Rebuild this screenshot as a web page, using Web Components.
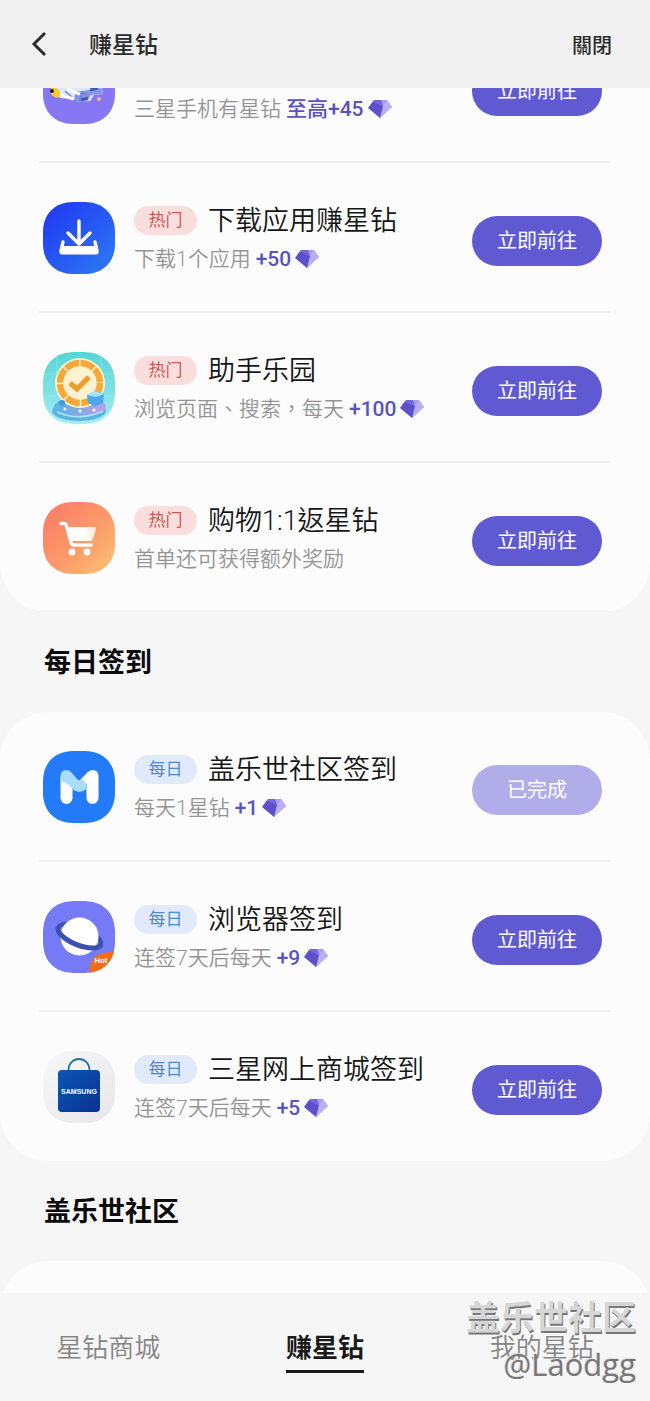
<!DOCTYPE html>
<html lang="zh-TW">
<head>
<meta charset="utf-8">
<meta name="viewport" content="width=device-width, initial-scale=1">
<title>赚星钻</title>
<style>
  body { margin: 0; background: #f6f6f6; color: #1a1a1a; font-family: Roboto, "Noto Sans CJK TC", "Noto Sans CJK SC", sans-serif; }
</style>
</head>
<body>
<rewards-app></rewards-app>

<template id="tpl-app">
  <style>
    :host { display: flex; flex-direction: column; height: 100vh; position: relative; }
    main { flex: 1; min-height: 0; overflow-y: auto; scrollbar-width: none; }
  </style>
  <app-header title-text="赚星钻" close-text="關閉"></app-header>
  <main>
    <task-card trailing-rule>
      <task-row icon="plane" action="立即前往">三星手机有星钻<star-value slot="value">至高+45</star-value></task-row>
      <task-row icon="download" tag="热门" heading="下载应用赚星钻" action="立即前往">下载1个应用<star-value slot="value">+50</star-value></task-row>
      <task-row icon="park" tag="热门" heading="助手乐园" action="立即前往">浏览页面、搜索，每天<star-value slot="value">+100</star-value></task-row>
      <task-row icon="cart" tag="热门" heading="购物1:1返星钻" action="立即前往">首单还可获得额外奖励</task-row>
    </task-card>
    <section-title>每日签到</section-title>
    <task-card>
      <task-row icon="community" tag="每日" daily heading="盖乐世社区签到" action="已完成" done>每天1星钻<star-value slot="value">+1</star-value></task-row>
      <task-row icon="browser" tag="每日" daily heading="浏览器签到" action="立即前往">连签7天后每天<star-value slot="value">+9</star-value></task-row>
      <task-row icon="shop" tag="每日" daily heading="三星网上商城签到" action="立即前往">连签7天后每天<star-value slot="value">+5</star-value></task-row>
    </task-card>
    <section-title>盖乐世社区</section-title>
    <task-card></task-card>
  </main>
  <bottom-nav></bottom-nav>
  <water-mark></water-mark>
</template>

<template id="tpl-header">
  <style>
    :host { display: block; background: #f1f1f1; color: #2b2b2b; }
    header { display: flex; align-items: center; height: 88px; padding: 0 38px 0 28px; box-sizing: border-box; }
    button { border: 0; background: none; padding: 0; margin: 0; font: inherit; color: inherit; cursor: pointer; }
    .back { width: 24px; height: 28px; }
    svg { display: block; width: 24px; height: 28px; }
    h1, .close { padding-top: 4px; line-height: 32px; font-weight: 500; }
    h1 { margin: 0 auto 0 37px; font-size: 23px; }
    .close { font-size: 20px; }
  </style>
  <header>
    <button class="back" aria-label="返回"><svg viewBox="0 0 24 28" fill="none" stroke="#2b2b2b" stroke-width="3"><path d="M17 3 6 14 17 25"/></svg></button>
    <h1></h1>
    <button class="close"></button>
  </header>
</template>

<template id="tpl-card">
  <style>
    :host { display: block; box-sizing: border-box; min-height: 150px; padding: 0 39px; border-radius: 48px; background: #fcfcfc; }
    ::slotted(task-row) { border-bottom: 2px solid #efefef; }
    ::slotted(task-row:last-child) { border-bottom: 1px solid transparent; }
    :host([trailing-rule]) ::slotted(task-row:last-child) { border-bottom-color: #efefef; }
  </style>
  <slot></slot>
</template>

<template id="tpl-section">
  <style>
    :host { display: block; padding: 31px 44px 29px; }
    h2 { margin: 0; font-size: 27px; line-height: 40px; font-weight: 700; color: #0c0c0c; }
  </style>
  <h2><slot></slot></h2>
</template>

<template id="tpl-value">
  <style>
    :host { display: inline-flex; align-items: center; gap: 4px; color: #5b52c2; font-weight: 500; }
    svg { width: 24px; height: 18px; }
  </style>
  <span><slot></slot></span>
  <svg viewBox="0 0 24 18" aria-hidden="true"><path d="M6 0H19L24 7 12 18Z" fill="#a89cf2"/><path d="M19 0 24 7 12 18 15 6Z" fill="#b9aff5"/><path d="M0 8 5 1 15 6 12 18Z" fill="#5d50cb"/><path d="M5 1 6 0H13L15 6Z" fill="#7466da"/></svg>
</template>

<template id="tpl-row">
  <style>
    :host { display: block; }
    article { display: flex; align-items: flex-start; gap: 19px; height: 148px; box-sizing: border-box; padding: 39px 9px 0 4px; }
    app-icon { flex: none; }
    .text { flex: 1; min-width: 0; display: flex; flex-direction: column; gap: 6px; }
    .head { display: flex; align-items: center; gap: 11px; min-height: 36px; }
    .tag { width: 63px; border-radius: 15px; background: #fadedd; color: #cd5650; font-size: 17px; line-height: 29px; text-align: center; }
    :host([daily]) .tag { background: #e0eafb; color: #4a89d4; }
    h3 { margin: 0; padding-top: 2px; font-size: 27px; line-height: 34px; font-weight: 350; color: #161616; white-space: nowrap; }
    p { margin: 0; display: flex; align-items: center; gap: 5px; font-size: 21px; line-height: 30px; font-weight: 350; color: #949494; white-space: nowrap; }
    button { flex: none; width: 130px; height: 50px; margin: 14px 0 0; padding: 0; border: 0; border-radius: 25px; background: #605ad2; color: #fff; font: 400 20px/50px Roboto, "Noto Sans CJK TC", sans-serif; cursor: pointer; }
    button:disabled { background: #b0ade8; }
  </style>
  <article>
    <app-icon></app-icon>
    <div class="text">
      <div class="head"></div>
      <p><span><slot></slot></span><slot name="value"></slot></p>
    </div>
    <button></button>
  </article>
</template>

<template id="tpl-nav">
  <style>
    :host { display: block; background: #f6f6f6; }
    nav { display: grid; grid-template-columns: repeat(3, 1fr); justify-items: center; height: 108px; box-sizing: border-box; padding-top: 35px; }
    a { height: 42px; border-bottom: 3px solid transparent; font-size: 26px; line-height: 40px; font-weight: 350; color: #858585; text-decoration: none; }
    a[aria-current] { font-weight: 700; color: #1a1a1a; border-color: #1a1a1a; }
  </style>
  <nav>
    <a href="#store">星钻商城</a>
    <a href="#earn" aria-current="page">赚星钻</a>
    <a href="#mine">我的星钻</a>
  </nav>
</template>

<template id="tpl-mark">
  <style>
    :host { position: absolute; right: 14px; bottom: 14px; display: flex; flex-direction: column; align-items: flex-end; pointer-events: none; }
    .name { font-size: 34px; line-height: 46px; font-weight: 700; color: #d6d6d6; text-shadow: 1px 2px 0 #777, -1px -1px 0 #fff; }
    .user { font-family: "Open Sans", "Noto Sans", sans-serif; font-size: 31px; line-height: 46px; color: #777; text-shadow: -1px -1px 0 #ddd; }
  </style>
  <span class="name">盖乐世社区</span>
  <span class="user">@Laodgg</span>
</template>

<script>
const SQ = 'M30 0H42C60 0 72 12 72 30V42C72 60 60 72 42 72H30C12 72 0 60 0 42V30C0 12 12 0 30 0Z';

const ICONS = {
  plane: `
    <path d="${SQ}" fill="#8678f4"/>
    <path d="M12 34 58 32 60 42 51 43 47 49 37 50 31 47 17 46Z" fill="#dfe6fb"/>
    <path d="M8 36Q16 34 18 43Q14 49 8 42Z" fill="#fdc931"/>
    <circle cx="9" cy="39" r="2" fill="#222"/>
    <path d="M33 40 58 36 60 42 48 43 44 49 35 51 31 46Z" fill="#8796df"/>
    <path d="M22 39 30 46M40 41l-4 8M30 39l14 3" stroke="#6983dc" stroke-width="1.5" fill="none"/>
    <path d="M17 43 31 47M24 37l13 5" stroke="#fff" stroke-width="3"/>
    <path d="M38 48l7-2M47 38l8-2" stroke="#3f59c0" stroke-width="3"/>
    <circle cx="56" cy="47" r="2" fill="#ffb38c"/>`,
  download: `
    <defs><linearGradient id="g" x1="0" y1="0" x2="1" y2="1"><stop offset="0" stop-color="#1f35f2"/><stop offset="1" stop-color="#2e7bf5"/></linearGradient></defs>
    <path d="${SQ}" fill="url(#g)"/>
    <g fill="none" stroke="#fff" stroke-linecap="round" stroke-linejoin="round">
      <path d="M36 19V41M25 31 36 42 47 31" stroke-width="3.4"/>
      <path d="M20 40 18 49M52 40 54 49" stroke-width="3.4"/>
    </g>
    <path d="M18 44H54L55.5 50Q55.5 52.5 53 52.5H19Q16.5 52.5 16.5 50Z" fill="#fff"/>`,
  park: `
    <defs><clipPath id="c"><path d="${SQ}"/></clipPath>
    <linearGradient id="g" x1="0" y1="0" x2="0" y2="1"><stop offset="0" stop-color="#57d5d5"/><stop offset=".7" stop-color="#8ce6ea"/><stop offset="1" stop-color="#a6f0f2"/></linearGradient>
    <linearGradient id="p" x1="0" x2="1"><stop offset="0" stop-color="#57b5e6"/><stop offset="1" stop-color="#b79fe4"/></linearGradient></defs>
    <g clip-path="url(#c)">
      <path d="${SQ}" fill="url(#g)"/>
      <path d="M0 22H72M0 44H72M14 0V72M58 0V72" stroke="#9eeaea" stroke-width="1" opacity=".6"/>
      <ellipse cx="36" cy="59" rx="27" ry="10" fill="#5cb5de"/>
      <ellipse cx="37" cy="55" rx="26" ry="10" fill="url(#p)"/>
      <path d="M14 60Q36 70 60 59" fill="none" stroke="#a9e7f8" stroke-width="1.5"/>
      <circle cx="37" cy="31" r="25" fill="#fff3cf"/>
      <circle cx="37" cy="31" r="20" fill="none" stroke="#f4a93a" stroke-width="6.5" stroke-dasharray="14.2 1.5"/>
      <path d="M27 31 34 37 46 25" fill="none" stroke="#ef9c2f" stroke-width="5"/>
      <path d="M44 43 52 39 61 42 60 51 52 54 45 51Z" fill="#4ba8ec"/>
      <path d="M44 43 52 39 61 42 53 45Z" fill="#a3e4fa"/>
      <circle cx="19" cy="51" r="3" fill="#3b9ce0"/>
      <circle cx="22" cy="57" r="1.5" fill="#fff"/><circle cx="37" cy="59" r="1.5" fill="#fff"/><circle cx="51" cy="58" r="1.5" fill="#fff"/>
    </g>`,
  cart: `
    <defs><linearGradient id="g" x1="0" y1="0" x2="1" y2="1"><stop offset="0" stop-color="#fb7966"/><stop offset=".55" stop-color="#fb9a6a"/><stop offset="1" stop-color="#fcc470"/></linearGradient>
    <linearGradient id="w" x1="0" y1="0" x2="1" y2="0"><stop offset="0" stop-color="#fff"/><stop offset=".6" stop-color="#fff"/><stop offset="1" stop-color="#ffe4d2"/></linearGradient></defs>
    <path d="${SQ}" fill="url(#g)"/>
    <path d="M18 21.5H21Q23 21.5 23.5 24L28 40Q28.5 43 31 43H48" fill="none" stroke="#fff" stroke-width="3.4" stroke-linecap="round"/>
    <path d="M23 25H51Q53.5 25 53 27.5L50 37Q49.5 39 47 39H27Z" fill="url(#w)"/>
    <circle cx="29" cy="50" r="3.4" fill="#fff"/><circle cx="44" cy="50" r="3.4" fill="#fff"/>`,
  community: `
    <path d="${SQ}" fill="#237bfa"/>
    <path d="M17.5 26V47A6 6 0 0 0 29.500 47V26Z" fill="#fff"/>
    <path d="M43.500 28V47A6 6 0 0 0 55.500 47V25Q55.500 19 49.500 19 46.500 19 44 22L36 30 38 36Z" fill="#fff"/>
    <path d="M17.500 30V25Q17.500 19 23.500 19 26.500 19 29 22L34 28Q36.500 30.500 39 28L43.500 24V38Q36.500 44 29.500 38Q24 31 17.500 30Z" fill="#a9dcff"/>
    <path d="M39 28 45 21 50 26 43.500 33Z" fill="#fff"/>`,
  browser: `
    <defs><clipPath id="c"><path d="${SQ}"/></clipPath></defs>
    <g clip-path="url(#c)">
      <path d="${SQ}" fill="#757bf6"/>
      <ellipse cx="36.5" cy="35" rx="23" ry="9" transform="rotate(22 36.5 35)" fill="none" stroke="#3d51ae" stroke-width="4"/>
      <circle cx="36.5" cy="35.5" r="19" fill="#fff"/>
      <path d="M13.5 35A23 9 0 0 0 59.5 35" transform="rotate(22 36.5 35)" fill="none" stroke="#3d51ae" stroke-width="5"/>
      <path d="M73 51Q56 50 51 57 46 63 46 74H73Z" fill="#f66c16"/>
      <text x="58" y="62" text-anchor="middle" font-size="8" font-weight="700" fill="#fff">Hot</text>
    </g>`,
  shop: `
    <defs><linearGradient id="g" x1="0" y1="0" x2="1" y2="1"><stop offset="0" stop-color="#f8f8f9"/><stop offset="1" stop-color="#e6e6ea"/></linearGradient>
    <linearGradient id="b" x1="0" y1="0" x2="1" y2="1"><stop offset="0" stop-color="#0c57b4"/><stop offset="1" stop-color="#0a3192"/></linearGradient></defs>
    <path d="${SQ}" fill="url(#g)"/>
    <path d="M25.5 20V18.5A10.5 10.5 0 0 1 46.5 18.5V20" fill="none" stroke="#2b6d9c" stroke-width="1.8"/>
    <rect x="15" y="19" width="42" height="42" rx="4" fill="url(#b)"/>
    <text x="36" y="43" text-anchor="middle" font-size="7" font-weight="700" font-family="Liberation Sans, sans-serif" fill="#fff">SAMSUNG</text>`
};

class TemplateElement extends HTMLElement {
  constructor() {
    super();
    const id = this.constructor.template;
    this.attachShadow({ mode: 'open' }).append(document.getElementById(id).content.cloneNode(true));
  }
  find(selector) { return this.shadowRoot.querySelector(selector); }
}

class AppIcon extends HTMLElement {
  static observedAttributes = ['name'];
  constructor() { super(); this.attachShadow({ mode: 'open' }); }
  attributeChangedCallback(_, __, name) {
    this.shadowRoot.innerHTML = `<style>:host{display:block;width:72px;height:72px}svg{display:block;width:100%;height:100%}</style><svg viewBox="0 0 72 72" aria-hidden="true">${ICONS[name] || ''}</svg>`;
  }
}

class AppHeader extends TemplateElement {
  static template = 'tpl-header';
  connectedCallback() {
    this.find('h1').textContent = this.getAttribute('title-text');
    this.find('.close').textContent = this.getAttribute('close-text');
  }
}
class TaskCard extends TemplateElement { static template = 'tpl-card'; }
class SectionTitle extends TemplateElement { static template = 'tpl-section'; }
class StarValue extends TemplateElement { static template = 'tpl-value'; }
class BottomNav extends TemplateElement { static template = 'tpl-nav'; }
class WaterMark extends TemplateElement { static template = 'tpl-mark'; }

class TaskRow extends TemplateElement {
  static template = 'tpl-row';
  connectedCallback() {
    this.find('app-icon').setAttribute('name', this.getAttribute('icon'));
    const head = this.find('.head');
    head.textContent = '';
    if (this.hasAttribute('tag')) {
      const tag = document.createElement('span');
      tag.className = 'tag';
      tag.textContent = this.getAttribute('tag');
      const title = document.createElement('h3');
      title.textContent = this.getAttribute('heading');
      head.append(tag, title);
    }
    const button = this.find('button');
    button.textContent = this.getAttribute('action');
    button.disabled = this.hasAttribute('done');
  }
}

class RewardsApp extends TemplateElement {
  static template = 'tpl-app';
  // The list opens part-way down its first task.
  connectedCallback() { this.find('main').scrollTop = 75; }
}

customElements.define('app-icon', AppIcon);
customElements.define('app-header', AppHeader);
customElements.define('star-value', StarValue);
customElements.define('task-row', TaskRow);
customElements.define('task-card', TaskCard);
customElements.define('section-title', SectionTitle);
customElements.define('bottom-nav', BottomNav);
customElements.define('water-mark', WaterMark);
customElements.define('rewards-app', RewardsApp);
</script>
</body>
</html>
